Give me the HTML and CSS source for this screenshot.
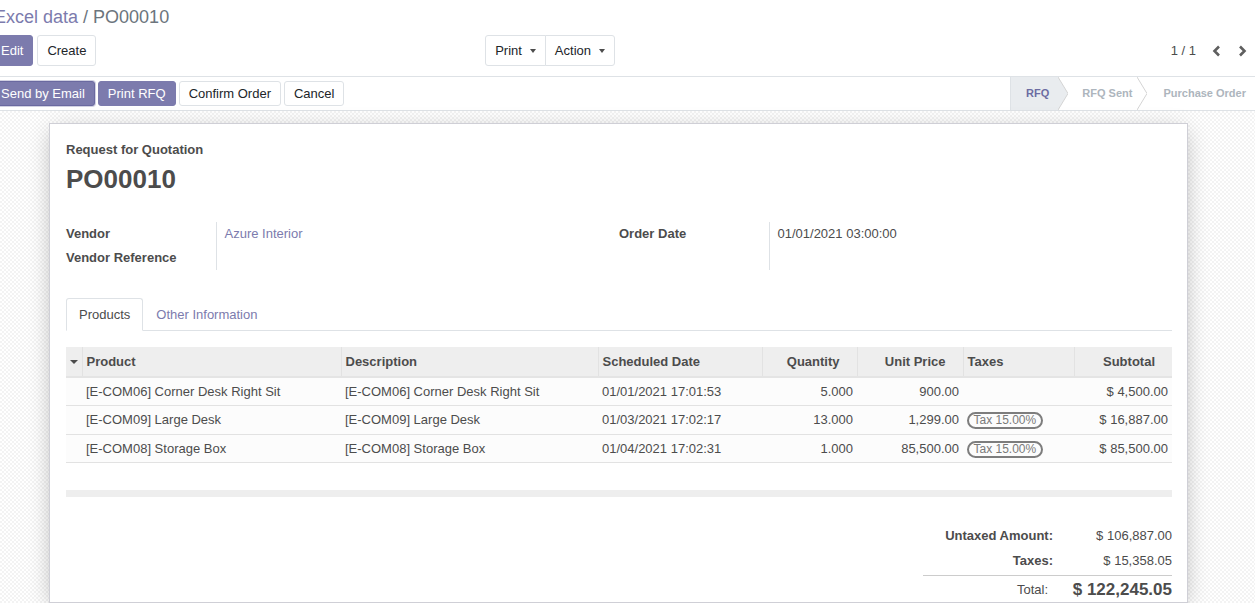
FILE: index.html
```html
<!DOCTYPE html>
<html>
<head>
<meta charset="utf-8">
<link rel="stylesheet" href="styles.css">
</head>
<body>
<div class="cp">
  <div class="cp-top">
    <a class="crumb-link">Excel data</a><span class="crumb-sep">/</span><span class="crumb-active">PO00010</span>
  </div>
  <div class="cp-bottom">
    <div class="cp-bottom-left">
      <div class="cp-buttons">
        <button class="btn btn-primary">Edit</button>
        <button class="btn btn-secondary">Create</button>
      </div>
      <div class="btn-group">
        <button class="btn btn-secondary btn-dd">Print<span class="caret"></span></button>
        <button class="btn btn-secondary btn-dd">Action<span class="caret"></span></button>
      </div>
    </div>
    <div class="cp-bottom-right">
      <span class="pager-value">1 / 1</span>
      <button class="pager-btn"><svg width="9" height="12" viewBox="0 0 9 12"><polyline points="7,1.5 2.5,6 7,10.5" fill="none" stroke="#5f5f5f" stroke-width="2.6"/></svg></button>
      <button class="pager-btn"><svg width="9" height="12" viewBox="0 0 9 12"><polyline points="2,1.5 6.5,6 2,10.5" fill="none" stroke="#5f5f5f" stroke-width="2.6"/></svg></button>
    </div>
  </div>
</div>

<div class="form">
  <header class="statusbar">
    <div class="sb-buttons">
      <button class="btn btn-primary btn-sm btn-focus">Send by Email</button>
      <button class="btn btn-primary btn-sm">Print RFQ</button>
      <button class="btn btn-secondary btn-sm">Confirm Order</button>
      <button class="btn btn-secondary btn-sm">Cancel</button>
    </div>
    <div class="sb-status">
      <span class="st st-active">RFQ</span>
      <svg class="st-sep" width="10" height="33" viewBox="0 0 10 33"><polygon points="0,0 10,16.5 0,33" fill="#e9ecef"/><polyline points="0,0 10,16.5 0,33" fill="none" stroke="#d4d4d4" stroke-width="1"/></svg>
      <span class="st st-mid">RFQ Sent</span>
      <svg class="st-sep" width="10" height="33" viewBox="0 0 10 33"><polyline points="0,0 10,16.5 0,33" fill="none" stroke="#d4d4d4" stroke-width="1"/></svg>
      <span class="st st-last">Purchase Order</span>
    </div>
  </header>

  <div class="sheet-bg">
    <div class="sheet">
      <div class="title">
        <div class="title-label">Request for Quotation</div>
        <h1 class="title-name">PO00010</h1>
      </div>

      <div class="groups">
        <table class="group">
          <tr><td class="lbl">Vendor</td><td class="val"><a class="link">Azure Interior</a></td></tr>
          <tr><td class="lbl">Vendor Reference</td><td class="val"></td></tr>
        </table>
        <table class="group">
          <tr><td class="lbl">Order Date</td><td class="val">01/01/2021 03:00:00</td></tr>
        </table>
      </div>

      <div class="tabs">
        <span class="tab tab-active">Products</span>
        <span class="tab">Other Information</span>
      </div>

      <table class="lines">
        <colgroup>
          <col style="width:16px"><col style="width:259px"><col style="width:257px"><col style="width:164px"><col style="width:95px"><col style="width:106px"><col style="width:111px"><col style="width:98px">
        </colgroup>
        <thead>
          <tr>
            <th class="handle"><span class="th-caret"></span></th>
            <th>Product</th>
            <th>Description</th>
            <th>Scheduled Date</th>
            <th class="num">Quantity</th>
            <th class="num">Unit Price</th>
            <th>Taxes</th>
            <th class="num">Subtotal</th>
          </tr>
        </thead>
        <tbody>
          <tr>
            <td></td><td>[E-COM06] Corner Desk Right Sit</td><td>[E-COM06] Corner Desk Right Sit</td><td>01/01/2021 17:01:53</td><td class="num">5.000</td><td class="num">900.00</td><td></td><td class="num">$ 4,500.00</td>
          </tr>
          <tr>
            <td></td><td>[E-COM09] Large Desk</td><td>[E-COM09] Large Desk</td><td>01/03/2021 17:02:17</td><td class="num">13.000</td><td class="num">1,299.00</td><td><span class="badge">Tax 15.00%</span></td><td class="num">$ 16,887.00</td>
          </tr>
          <tr>
            <td></td><td>[E-COM08] Storage Box</td><td>[E-COM08] Storage Box</td><td>01/04/2021 17:02:31</td><td class="num">1.000</td><td class="num">85,500.00</td><td><span class="badge">Tax 15.00%</span></td><td class="num">$ 85,500.00</td>
          </tr>
          <tr class="filler"><td colspan="8"></td></tr>
        </tbody>
        <tfoot>
          <tr><td colspan="8"></td></tr>
        </tfoot>
      </table>

      <div class="totals">
        <div class="tot-lbl">Untaxed Amount:</div><div class="tot-val">$ 106,887.00</div>
        <div class="tot-lbl">Taxes:</div><div class="tot-val">$ 15,358.05</div>
        <div class="tot-line"></div>
        <div class="tot-lbl tot-total-lbl">Total:</div><div class="tot-val tot-total-val">$ 122,245.05</div>
      </div>
    </div>
  </div>
</div>
</body>
</html>
```

FILE: styles.css
```css
* { box-sizing: border-box; }
html, body { margin: 0; padding: 0; }
body {
  font-family: "Liberation Sans", Arial, sans-serif;
  font-size: 13px;
  line-height: 1.5;
  color: #4c4c4c;
  background: #fff;
  overflow: hidden;
  width: 1255px;
  height: 603px;
}

/* control panel */
.cp {
  margin-left: -9px;
  padding: 0 0 10px 0;
  border-bottom: 1px solid #dee2e6;
}
.cp-top {
  height: 35px;
  display: flex;
  align-items: center;
  font-size: 18px;
  padding-left: 3px;
}
.crumb-link { color: #7C7BAD; }
.crumb-sep { color: #6c757d; padding: 0 5px 0 5px; }
.crumb-active { color: #6c757d; }

.cp-bottom { display: flex; height: 31px; }
.cp-bottom-left {
  flex: 0 0 50%;
  display: flex;
  justify-content: space-between;
  padding-right: 8px;
}
.cp-buttons { display: flex; gap: 4px; }
.cp-bottom-right {
  flex: 1;
  display: flex;
  justify-content: flex-end;
  align-items: center;
  padding-right: 0;
}

.btn {
  font-family: inherit;
  font-size: 13px;
  line-height: 19.5px;
  padding: 4.5px 9px;
  border: 1px solid transparent;
  border-radius: 3px;
  cursor: pointer;
  color: #212529;
  background: #fff;
}
.btn-primary { background: #7C7BAD; color: #fff; border-color: #7C7BAD; }
.btn-secondary { background: #fff; color: #212529; border-color: #dee2e6; }

.btn-group { display: flex; }
.btn-group .btn:first-child { border-top-right-radius: 0; border-bottom-right-radius: 0; }
.btn-group .btn:last-child { border-top-left-radius: 0; border-bottom-left-radius: 0; margin-left: -1px; }
.btn-dd { display: inline-flex; align-items: center; }
.caret {
  display: inline-block;
  width: 0; height: 0;
  margin-left: 8px;
  border-left: 3.5px solid transparent;
  border-right: 3.5px solid transparent;
  border-top: 4px solid #4c4c4c;
}

.pager-value { color: #4c4c4c; margin-right: 7px; }
.pager-btn {
  background: none;
  border: 0;
  padding: 0;
  width: 26px;
  height: 24px;
  display: flex;
  align-items: center;
  justify-content: center;
}

/* status bar */
.statusbar {
  margin-left: -9px;
  height: 34px;
  border-bottom: 1px solid #dee2e6;
  display: flex;
  justify-content: space-between;
  align-items: center;
}
.sb-buttons { display: flex; gap: 3px; }
.btn-sm { padding: 2px 9px; line-height: 19px; font-size: 13px; }
.btn-focus { border-color: #6a69a0; box-shadow: 0 0 0 1px rgba(124,123,173,.35); }

.sb-status {
  display: flex;
  align-self: stretch;
  border-left: 1px solid #dee2e6;
}
.st {
  font-size: 11px;
  font-weight: bold;
  line-height: 33px;
  color: #adb5bd;
  white-space: nowrap;
}
.st-active { background: #e9ecef; color: #6c6ca2; padding: 0 9px 0 15px; }
.st-mid { padding: 0 5px 0 14px; }
.st-last { padding: 0 9px 0 16px; }
.st-sep { display: block; flex: 0 0 10px; }

/* sheet */
.sheet-bg {
  display: flex;
  justify-content: center;
  padding: 12px 18px 0 0;
  height: 492px;
  background-color: #fff;
  background-image: repeating-conic-gradient(#f3f3f3 0 25%, #fff 0 50%);
  background-size: 4px 4px;
}
.sheet {
  width: 1139px;
  flex: 0 0 1139px;
  background: #fff;
  border: 1px solid #cfcfd6;
  box-shadow: 0 5px 22px -4px rgba(0,0,0,.3);
  padding: 16px 15px 0 16px;
}

.title-label { font-weight: bold; }
.title-name {
  margin: 4px 0 0;
  font-size: 26px;
  line-height: 31px;
  font-weight: bold;
  color: #4c4c4c;
}

.groups {
  display: grid;
  grid-template-columns: 1fr 1fr;
  margin-top: 27px;
}
.group { border-collapse: collapse; }
.group td { padding: 2px 0; line-height: 20px; vertical-align: top; }
.group .lbl {
  width: 150px;
  font-weight: bold;
  border-right: 1px solid #dee2e6;
  padding-right: 8px;
}
.group .val { padding-left: 8px; }
.link { color: #7C7BAD; }

.tabs {
  margin-top: 28px;
  display: flex;
  border-bottom: 1px solid #dee2e6;
}
.tab {
  padding: 6px 12px;
  line-height: 19.5px;
  color: #7C7BAD;
  border: 1px solid transparent;
  margin-bottom: -1px;
}
.tab-active {
  color: #4c4c4c;
  border-color: #dee2e6 #dee2e6 #fff;
  border-radius: 3px 3px 0 0;
  background: #fff;
}

.lines {
  margin-top: 16px;
  width: 1106px;
  table-layout: fixed;
  border-collapse: collapse;
}
.lines th {
  background: #eeeeee;
  font-weight: bold;
  text-align: left;
  height: 30px;
  padding: 0 4px;
  border-left: 1px solid #e2e2e2;
  border-bottom: 2px solid #e4e4e4;
  white-space: nowrap;
}
.lines th:first-child { border-left: 0; }
.lines th.num { text-align: right; padding-right: 17px; }
.lines th.handle { padding: 0 0 0 4px; }
.th-caret {
  display: inline-block;
  width: 0; height: 0;
  border-left: 4px solid transparent;
  border-right: 4px solid transparent;
  border-top: 4px solid #4c4c4c;
  vertical-align: middle;
}
.lines td {
  height: 28.5px;
  padding: 0 4px;
  border-top: 1px solid #e2e2e2;
  white-space: nowrap;
  overflow: hidden;
  background: #fcfcfc;
}
.lines td.num { text-align: right; }
.lines tr.filler td { background: #fff; height: 27px; }
.lines tfoot td { background: #eeeeee; height: 7px; padding: 0; border-top: 0; }

.badge {
  display: inline-block;
  border: 2px solid #7d7d7d;
  border-radius: 10px;
  padding: 0 4.5px;
  font-size: 12px;
  line-height: 13px;
  color: #7a7a7a;
  vertical-align: middle;
}

.totals {
  margin: 27px 0 0 auto;
  width: 249px;
  display: grid;
  grid-template-columns: 1fr 119px;
}
.tot-lbl {
  text-align: right;
  font-weight: bold;
  line-height: 20px;
  padding: 2.5px 0;
}
.tot-val {
  text-align: right;
  line-height: 20px;
  padding: 2.5px 0;
}
.tot-line {
  grid-column: 1 / 3;
  border-top: 1px solid #ccc;
  margin-top: 1px;
}
.tot-total-lbl { font-weight: normal; padding-right: 5px; line-height: 27px; padding-top: 0; }
.tot-total-val { font-weight: bold; font-size: 17px; line-height: 27px; padding-top: 0; }
```
